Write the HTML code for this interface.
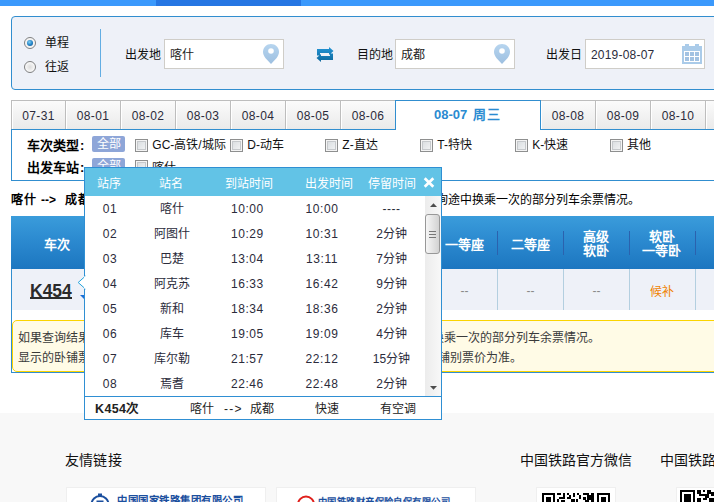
<!DOCTYPE html>
<html lang="zh-CN">
<head>
<meta charset="utf-8">
<title>12306</title>
<style>
*{box-sizing:border-box;margin:0;padding:0}
html,body{width:714px;height:502px;overflow:hidden;background:#fff}
body{position:relative;font-family:"Liberation Sans",sans-serif;font-size:12px;color:#222;line-height:14px}
.a{position:absolute;white-space:nowrap}
.t{position:absolute;white-space:nowrap;height:14px;line-height:14px;overflow:visible}
.j{text-align:justify;text-align-last:justify}
.c{text-align:center;text-align-last:center}
.b{font-weight:bold}
.w{color:#fff}
#bar{left:0;top:0;width:714px;height:6px;background:#3b99fc}
#bar2{left:156px;top:0;width:145px;height:6px;background:#2676e3}
#sp{left:11px;top:16px;width:730px;height:74px;border:1px solid #318ecf;border-radius:4px;background:#eef1f8}
.inp{position:absolute;top:39px;width:120px;height:30px;border:1px solid #cfcdc8;background:#fff}
.radio{position:absolute;width:12px;height:12px;border-radius:50%;border:1px solid #7e7f80;background:radial-gradient(circle at 50% 50%,#dcdcdc 0,#efefef 45%,#fbfbfb 75%)}
.radio.on:after{content:"";position:absolute;left:2px;top:2px;width:6px;height:6px;border-radius:50%;background:radial-gradient(circle at 40% 35%,#7fd0f5 0,#1f7fc4 55%,#0f4f8a 100%)}
.tab{position:absolute;top:100px;height:30px;width:55px;border-top:1px solid #bdbdbd;border-right:1px solid #bdbdbd;background:linear-gradient(#fbfbfb,#e9e9e9);text-align:center;line-height:31px;color:#2b2b3b;font-size:12px;letter-spacing:.35px;box-shadow:inset 1px 0 0 #fff}
#tabon{position:absolute;left:395px;top:100px;width:146px;height:30px;background:#fff;border:1px solid #318ecf;border-bottom:none;z-index:2}
#tabon:after{content:"";position:absolute;left:0;right:0;bottom:-1px;height:1px;background:#fff}
#fp{left:11px;top:129px;width:730px;height:52px;border:1px solid #318ecf;background:#fff}
.badge{position:absolute;left:92px;width:33px;height:16px;border-radius:2px;background:#8ea6d8}
.cb{position:absolute;width:13px;height:13px;border:1px solid #8e8f8f;box-shadow:inset 0 0 0 1px #f4f4f4, inset 0 0 0 2px #c6c9cc;background:linear-gradient(135deg,#d5d9dc,#f6f7f8)}
#th{left:11px;top:216px;width:730px;height:53px;background:linear-gradient(#3a9cdb,#2b89cf 48%,#1c76c0)}
#tr{left:11px;top:269px;width:730px;height:41px;background:#eef1f8}
.hs{position:absolute;top:231px;width:1px;height:24px;background:#2b62ae}
.bs{position:absolute;top:269px;width:1px;height:41px;background:#b3cfe0}
.hd{color:#fff;font-weight:bold;font-size:13px}
#wrap{left:11px;top:269px;width:730px;height:104px;border-left:1px solid #318ecf;border-bottom:1px solid #318ecf}
#tip{left:12px;top:320px;width:730px;height:52px;border:1px solid #fbd400;border-radius:5px;background:#fffbe6}
.tp{color:#3a3a3a}
#ft{left:0;top:413px;width:714px;height:89px;background:#f8f8f8}
.ftt{font-size:14px;color:#111;height:16px;line-height:16px}
.lbox{position:absolute;top:487px;height:30px;background:#fff;border:1px solid #efefef}
#pop{left:84px;top:167px;width:358px;height:253px;background:#fff;border:1px solid #2f8fd3;z-index:5;overflow:hidden}
#ph{left:0;top:0;width:356px;height:28px;background:#62c3e6}
#pf{left:0;top:228px;width:356px;height:23px;border-top:1px solid #2f8fd3;background:#fff}
.row{position:absolute;left:0;width:340px;height:25px}
.row .t{top:6px;color:#2b2b3b}
.n{text-align:center;text-align-last:center;letter-spacing:.55px}
#sb{left:340px;top:28px;width:16px;height:200px;background:linear-gradient(90deg,#ececec,#f8f8f8)}
#thumb{left:0;top:18px;width:15px;height:40px;border:1px solid #989898;border-radius:3px;background:linear-gradient(90deg,#f6f6f6,#e6e6e6 45%,#d2d2d2)}
</style>
</head>
<body>
<div class="a" id="bar"></div><div class="a" id="bar2"></div>

<div class="a" id="sp"></div>
<div class="radio on" style="left:24px;top:37px"></div>
<div class="radio" style="left:24px;top:61px"></div>
<div class="t j" style="left:44.5px;top:36px;width:24px;color:#111">单程</div>
<div class="t j" style="left:44.5px;top:60px;width:24px;color:#111">往返</div>
<div class="a" style="left:100px;top:29px;width:1px;height:48px;background:#62ade3"></div>
<div class="t j" style="left:125px;top:48px;width:36px;color:#111">出发地</div>
<div class="inp" style="left:164px"></div>
<div class="t j" style="left:169.5px;top:48px;width:24px">喀什</div>
<div class="t j" style="left:356.5px;top:48px;width:36px;color:#111">目的地</div>
<div class="inp" style="left:395px"></div>
<div class="t j" style="left:400.5px;top:48px;width:24px">成都</div>
<div class="t j" style="left:546px;top:48px;width:36px;color:#111">出发日</div>
<div class="inp" style="left:585px"></div>
<div class="t" style="left:591px;top:48px;color:#2b2b3b;letter-spacing:.2px">2019-08-07</div>
<svg class="a" style="left:263px;top:44px" width="16" height="20" viewBox="0 0 16 20"><defs><linearGradient id="pg" x1="0" y1="0" x2="0" y2="1"><stop offset="0" stop-color="#b7d5ef"/><stop offset="1" stop-color="#9dbfe0"/></linearGradient></defs><path d="M8 0C3.6 0 0 3.5 0 7.8c0 2.2 1 4.300 2.400 6.200L8 20l5.600-6c1.400-1.900 2.400-4 2.400-6.200C16 3.500 12.400 0 8 0z" fill="url(#pg)"/><circle cx="8" cy="7" r="2.800" fill="#fff"/></svg>
<svg class="a" style="left:494px;top:44px" width="16" height="20" viewBox="0 0 16 20"><path d="M8 0C3.6 0 0 3.5 0 7.8c0 2.2 1 4.300 2.400 6.200L8 20l5.600-6c1.400-1.900 2.400-4 2.400-6.200C16 3.500 12.400 0 8 0z" fill="url(#pg)"/><circle cx="8" cy="7" r="2.800" fill="#fff"/></svg>
<svg class="a" style="left:316px;top:46px" width="18" height="17" viewBox="0 0 18 17"><defs><linearGradient id="sg" x1="0" y1="0" x2="0" y2="1"><stop offset="0" stop-color="#2294d6"/><stop offset="1" stop-color="#0d689c"/></linearGradient></defs><path d="M1 3h12V1l4.500 4L13 9V7H4v2.500H1z M17 14H5v2L0.500 12 5 8v2h9V7.500h3z" fill="url(#sg)"/></svg>
<svg class="a" style="left:682px;top:44px" width="20" height="20" viewBox="0 0 20 20"><path d="M3 0h4v2h6V0h4v2h3v18H0V2h3z" fill="#aacbe9"/><rect x="2" y="7" width="16" height="11" fill="#fff"/><g fill="#a2c2e2"><rect x="3" y="8" width="4" height="4"/><rect x="8" y="8" width="4" height="4"/><rect x="13" y="8" width="4" height="4"/><rect x="3" y="13" width="4" height="4"/><rect x="8" y="13" width="4" height="4"/><rect x="13" y="13" width="4" height="4"/></g></svg>
<div class="tab" style="left:11px;border-left:1px solid #bdbdbd">07-31</div>
<div class="tab" style="left:66px">08-01</div>
<div class="tab" style="left:121px">08-02</div>
<div class="tab" style="left:176px">08-03</div>
<div class="tab" style="left:231px">08-04</div>
<div class="tab" style="left:286px">08-05</div>
<div class="tab" style="left:341px">08-06</div>
<div class="tab" style="left:541px">08-08</div>
<div class="tab" style="left:596px">08-09</div>
<div class="tab" style="left:651px">08-10</div>
<div class="tab" style="left:706px"></div>
<div class="a" id="fp"></div>
<div id="tabon"></div>
<div class="t j b" style="left:434px;top:107px;width:66.5px;z-index:3;color:#2a8bd1;font-size:13px;height:15px;line-height:15px">08-07 周三</div>
<div class="t j b" style="left:26.5px;top:139px;width:52px;font-size:13px;color:#000">车次类型</div>
<div class="t b" style="left:80px;top:139px;font-size:13px;color:#000">:</div>
<div class="badge" style="top:136px"></div>
<div class="t j w" style="left:96.5px;top:137px;width:24px">全部</div>
<div class="cb" style="left:135px;top:139px"></div>
<div class="t j" style="left:152.3px;top:138px;width:70.5px;color:#111">GC-高铁/城际</div>
<div class="cb" style="left:230px;top:139px"></div>
<div class="t j" style="left:247.3px;top:138px;width:35px;color:#111">D-动车</div>
<div class="cb" style="left:325px;top:139px"></div>
<div class="t j" style="left:342.3px;top:138px;width:35px;color:#111">Z-直达</div>
<div class="cb" style="left:420px;top:139px"></div>
<div class="t j" style="left:437.3px;top:138px;width:35px;color:#111">T-特快</div>
<div class="cb" style="left:515px;top:139px"></div>
<div class="t j" style="left:532.3px;top:138px;width:35px;color:#111">K-快速</div>
<div class="cb" style="left:610px;top:139px"></div>
<div class="t j" style="left:627.3px;top:138px;width:24px;color:#111">其他</div>
<div class="t j b" style="left:26.5px;top:161px;width:52px;font-size:13px;color:#000">出发车站</div>
<div class="t b" style="left:80px;top:161px;font-size:13px;color:#000">:</div>
<div class="badge" style="top:158px"></div>
<div class="t j w" style="left:96.5px;top:159px;width:24px">全部</div>
<div class="cb" style="left:135px;top:160px"></div>
<div class="t j" style="left:152.3px;top:161px;width:24px;color:#111">喀什</div>
<div class="t j b" style="left:11px;top:193px;width:25px;color:#000">喀什</div>
<div class="t j b" style="left:41px;top:193px;width:19.5px;color:#000">--&gt;</div>
<div class="t j b" style="left:65px;top:193px;width:25px;color:#000">成都</div>
<div class="t j" style="left:424px;top:193px;width:216px;color:#000">查询途中换乘一次的部分列车余票情况。</div>
<div class="a" id="th"></div>
<div class="a" id="tr"></div>
<div class="t j hd" style="left:43.7px;top:238px;width:26px">车次</div>
<div class="t j hd" style="left:444.5px;top:238px;width:39px">一等座</div>
<div class="t j hd" style="left:510.5px;top:238px;width:39px">二等座</div>
<div class="t j hd" style="left:583px;top:230px;width:26px">高级</div>
<div class="t j hd" style="left:583px;top:244px;width:26px">软卧</div>
<div class="t j hd" style="left:648.5px;top:230px;width:26px">软卧</div>
<div class="t j hd" style="left:642px;top:244px;width:39px">一等卧</div>
<div class="hs" style="left:497px"></div><div class="bs" style="left:497px"></div>
<div class="hs" style="left:563px"></div><div class="bs" style="left:563px"></div>
<div class="hs" style="left:629px"></div><div class="bs" style="left:629px"></div>
<div class="hs" style="left:695px"></div><div class="bs" style="left:695px"></div>
<div class="t j c" style="left:444.5px;top:284px;width:40px;color:#8a8a8a">--</div>
<div class="t j c" style="left:510.5px;top:284px;width:40px;color:#8a8a8a">--</div>
<div class="t j c" style="left:576.5px;top:284px;width:40px;color:#8a8a8a">--</div>
<div class="t j" style="left:650px;top:285px;width:24px;color:#f08200">候补</div>
<div class="a b" style="left:30px;top:281px;font-size:17.500px;line-height:20px;color:#2b2b2b;border-bottom:2px solid #2b2b2b;height:18px">K454</div>
<div class="a" style="left:80px;top:295px;width:0;height:0;border-left:5px solid transparent;border-right:5px solid transparent;border-top:5px solid #1a6fd8"></div>
<div class="a" id="wrap"></div>
<div class="a" id="tip"></div>
<div class="t j tp" style="left:18px;top:331px;width:252px">如果查询结果中没有满意的车次，您还可以使用</div>
<div class="t j tp" style="left:384px;top:331px;width:216px">查询途中换乘一次的部分列车余票情况。</div>
<div class="t j tp" style="left:18px;top:351px;width:504px">显示的卧铺票价均为上铺票价，供您参考。具体票价以您确认支付时实际购买的铺别票价为准。</div>
<div class="a" id="ft"></div>
<div class="t j ftt" style="left:64.5px;top:452px;width:57px">友情链接</div>
<div class="t j ftt" style="left:519.5px;top:452px;width:112.5px">中国铁路官方微信</div>
<div class="t j ftt" style="left:659.5px;top:452px;width:112.5px">中国铁路官方微博</div>
<div class="lbox" style="left:66px;width:200px"></div>
<div class="lbox" style="left:276px;width:200px"></div>
<div class="lbox" style="left:536px;width:80px"></div>
<div class="lbox" style="left:676px;width:80px"></div>
<svg class="a" style="left:90px;top:493px" width="20" height="10" viewBox="0 0 20 10"><circle cx="10" cy="11.500" r="8.500" fill="none" stroke="#1b4f9e" stroke-width="2"/><rect x="8" y="0.500" width="4" height="2.500" fill="#1b4f9e"/><rect x="6.500" y="7.500" width="7" height="1.600" fill="#1b4f9e"/></svg>
<div class="t j b" style="left:117px;top:494px;width:126px;font-size:10.400px;color:#1b4f9e">中国国家铁路集团有限公司</div>
<svg class="a" style="left:297px;top:495px" width="18" height="8" viewBox="0 0 18 8"><circle cx="9" cy="9.500" r="8" fill="none" stroke="#e0201c" stroke-width="2"/></svg>
<div class="t j b" style="left:318px;top:495px;width:131.5px;font-size:9.350px;color:#1b4f9e">中国铁路财产保险自保有限公司</div>
<svg class="a" style="left:542px;top:493px" width="68" height="9" viewBox="0 0 68 9" shape-rendering="crispEdges"><g fill="#000"><path d="M0 0h13v9H0z M2 2v7h9V2z" fill-rule="evenodd"/><rect x="4" y="4" width="5" height="5"/><path d="M55 0h13v9H55z M57 2v7h9V2z" fill-rule="evenodd"/><rect x="59" y="4" width="5" height="5"/><rect x="15" y="0" width="4" height="2"/><rect x="21" y="0" width="2" height="4"/><rect x="17" y="4" width="6" height="2"/><rect x="15" y="6" width="2" height="3"/><rect x="19" y="7" width="4" height="2"/><rect x="25" y="0" width="2" height="2"/><rect x="25" y="4" width="4" height="2"/><rect x="27" y="2" width="2" height="2"/><rect x="29" y="6" width="4" height="3"/><rect x="31" y="0" width="2" height="4"/><rect x="35" y="0" width="2" height="2"/><rect x="37" y="2" width="2" height="4"/><rect x="34" y="6" width="2" height="3"/><rect x="41" y="0" width="6" height="2"/><rect x="45" y="2" width="4" height="5"/><rect x="41" y="4" width="3" height="3"/><rect x="49" y="0" width="3" height="9"/><rect x="43" y="7" width="4" height="2"/></g></svg>
<svg class="a" style="left:680px;top:490px" width="34" height="12" viewBox="0 0 34 12" shape-rendering="crispEdges"><g fill="#000"><path d="M0 0h15v12H0z M2 2v10h11V2z" fill-rule="evenodd"/><rect x="4" y="4" width="7" height="8"/><rect x="17" y="0" width="4" height="4"/><rect x="23" y="0" width="2" height="2"/><rect x="19" y="4" width="6" height="2"/><rect x="27" y="0" width="4" height="4"/><rect x="25" y="4" width="4" height="4"/><rect x="17" y="8" width="4" height="4"/><rect x="31" y="2" width="3" height="4"/><rect x="23" y="8" width="4" height="2"/><rect x="29" y="8" width="5" height="4"/></g></svg>
<div class="a" id="pop">
<div class="a" id="ph">
<div class="t j w" style="left:12px;top:9px;width:24px">站序</div>
<div class="t j w" style="left:74px;top:9px;width:24px">站名</div>
<div class="t j w" style="left:139.5px;top:9px;width:48px">到站时间</div>
<div class="t j w" style="left:220px;top:9px;width:48px">出发时间</div>
<div class="t j w" style="left:282.5px;top:9px;width:48px">停留时间</div>
<svg class="a" style="left:338px;top:9px" width="12" height="11" viewBox="0 0 12 11"><path d="M1.700 1.200L10.300 9.800M10.300 1.200L1.700 9.800" stroke="#fff" stroke-width="2.700" fill="none"/></svg>
</div>
<div class="row" style="top:28px">
<div class="t j n" style="left:5px;top:6px;width:40px">01</div>
<div class="t j" style="left:74.5px;top:6px;width:24px">喀什</div>
<div class="t j n" style="left:137.4px;top:6px;width:50px">10:00</div>
<div class="t j n" style="left:212px;top:6px;width:50px">10:00</div>
<div class="t j n" style="left:281.5px;top:6px;width:50px">----</div>
</div>
<div class="row" style="top:53px">
<div class="t j n" style="left:5px;top:6px;width:40px">02</div>
<div class="t j" style="left:68.5px;top:6px;width:36px">阿图什</div>
<div class="t j n" style="left:137.4px;top:6px;width:50px">10:29</div>
<div class="t j n" style="left:212px;top:6px;width:50px">10:31</div>
<div class="t j" style="left:291.15px;top:6px;width:30.7px">2分钟</div>
</div>
<div class="row" style="top:78px">
<div class="t j n" style="left:5px;top:6px;width:40px">03</div>
<div class="t j" style="left:74.5px;top:6px;width:24px">巴楚</div>
<div class="t j n" style="left:137.4px;top:6px;width:50px">13:04</div>
<div class="t j n" style="left:212px;top:6px;width:50px">13:11</div>
<div class="t j" style="left:291.15px;top:6px;width:30.7px">7分钟</div>
</div>
<div class="row" style="top:103px">
<div class="t j n" style="left:5px;top:6px;width:40px">04</div>
<div class="t j" style="left:68.5px;top:6px;width:36px">阿克苏</div>
<div class="t j n" style="left:137.4px;top:6px;width:50px">16:33</div>
<div class="t j n" style="left:212px;top:6px;width:50px">16:42</div>
<div class="t j" style="left:291.15px;top:6px;width:30.7px">9分钟</div>
</div>
<div class="row" style="top:128px">
<div class="t j n" style="left:5px;top:6px;width:40px">05</div>
<div class="t j" style="left:74.5px;top:6px;width:24px">新和</div>
<div class="t j n" style="left:137.4px;top:6px;width:50px">18:34</div>
<div class="t j n" style="left:212px;top:6px;width:50px">18:36</div>
<div class="t j" style="left:291.15px;top:6px;width:30.7px">2分钟</div>
</div>
<div class="row" style="top:153px">
<div class="t j n" style="left:5px;top:6px;width:40px">06</div>
<div class="t j" style="left:74.5px;top:6px;width:24px">库车</div>
<div class="t j n" style="left:137.4px;top:6px;width:50px">19:05</div>
<div class="t j n" style="left:212px;top:6px;width:50px">19:09</div>
<div class="t j" style="left:291.15px;top:6px;width:30.7px">4分钟</div>
</div>
<div class="row" style="top:178px">
<div class="t j n" style="left:5px;top:6px;width:40px">07</div>
<div class="t j" style="left:68.5px;top:6px;width:36px">库尔勒</div>
<div class="t j n" style="left:137.4px;top:6px;width:50px">21:57</div>
<div class="t j n" style="left:212px;top:6px;width:50px">22:12</div>
<div class="t j" style="left:287.8px;top:6px;width:37.4px">15分钟</div>
</div>
<div class="row" style="top:203px">
<div class="t j n" style="left:5px;top:6px;width:40px">08</div>
<div class="t j" style="left:74.5px;top:6px;width:24px">焉耆</div>
<div class="t j n" style="left:137.4px;top:6px;width:50px">22:46</div>
<div class="t j n" style="left:212px;top:6px;width:50px">22:48</div>
<div class="t j" style="left:291.15px;top:6px;width:30.7px">2分钟</div>
</div>
<div class="a" id="sb"><svg class="a" style="left:5px;top:7px" width="7" height="4" viewBox="0 0 7 4"><path d="M0 4L3.500 0.300L7 4z" fill="#4d4d4d"/></svg><div class="a" id="thumb"><div class="a" style="left:3px;top:16px;width:7px;height:7px;border-top:1px solid #777;border-bottom:1px solid #777"></div><div class="a" style="left:3px;top:19px;width:7px;height:1px;background:#777"></div></div><svg class="a" style="left:5px;top:190px" width="7" height="4" viewBox="0 0 7 4"><path d="M0 0L3.500 3.700L7 0z" fill="#4d4d4d"/></svg></div>
<div class="a" id="pf">
<div class="t b" style="left:10px;top:5px;font-size:12.500px;letter-spacing:.35px;color:#222">K454次</div>
<div class="t j" style="left:104.5px;top:5px;width:24px">喀什</div>
<div class="t" style="left:139px;top:5px;letter-spacing:1.300px">--&gt;</div>
<div class="t j" style="left:165px;top:5px;width:24px">成都</div>
<div class="t j" style="left:229.5px;top:5px;width:24px">快速</div>
<div class="t j" style="left:294.7px;top:5px;width:36px">有空调</div>
</div>
</div>
<svg class="a" style="left:77px;top:275px;z-index:6" width="9" height="15" viewBox="0 0 9 15"><path d="M8.500 1L1.200 7.500L8.500 14" fill="#fff" stroke="#23a3dc" stroke-width="1"/><rect x="7" y="1.500" width="2" height="12" fill="#fff"/></svg>
</body>
</html>
